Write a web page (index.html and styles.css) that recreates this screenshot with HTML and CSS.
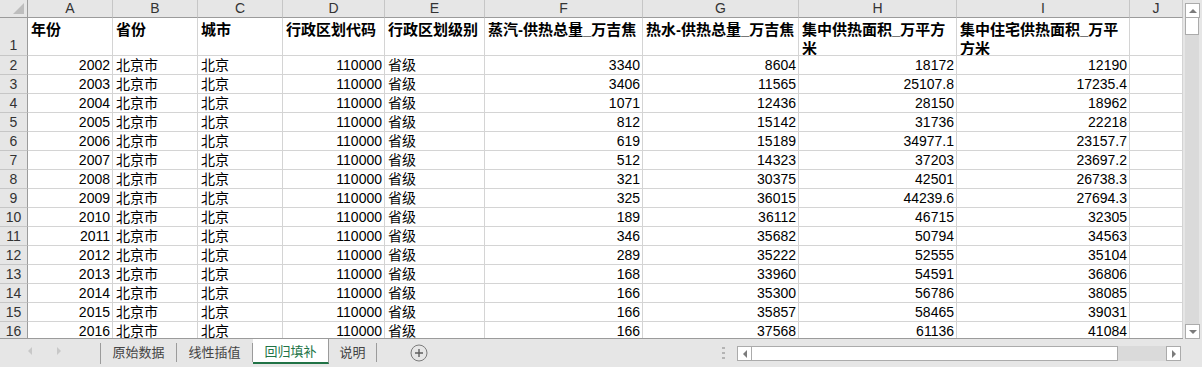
FILE: index.html
```html
<!doctype html>
<html lang="zh">
    <head>
        <meta charset="utf-8">
        <title>回归填补</title>
        <link rel="stylesheet" href="styles.css">
    </head>
    <body>
        <div class="book">

            <div class="main">
                <div class="sheet">

                    <div class="row row-cols">
                        <div class="corner"></div>
                        <div>A</div><div>B</div><div>C</div><div>D</div><div>E</div>
                        <div>F</div><div>G</div><div>H</div><div>I</div><div>J</div>
                    </div>

                    <div class="row row-head">
                        <div class="rh">1</div>
                        <div>年份</div>
                        <div>省份</div>
                        <div>城市</div>
                        <div>行政区划代码</div>
                        <div>行政区划级别</div>
                        <div>蒸汽-供热总量_万吉焦</div>
                        <div>热水-供热总量_万吉焦</div>
                        <div>集中供热面积_万平方<br>米</div>
                        <div>集中住宅供热面积_万平<br>方米</div>
                        <div></div>
                    </div>

                    <div class="row"><div class="rh">2</div><div class="n">2002</div><div>北京市</div><div>北京</div><div class="n">110000</div><div>省级</div><div class="n">3340</div><div class="n">8604</div><div class="n">18172</div><div class="n">12190</div><div></div></div>
                    <div class="row"><div class="rh">3</div><div class="n">2003</div><div>北京市</div><div>北京</div><div class="n">110000</div><div>省级</div><div class="n">3406</div><div class="n">11565</div><div class="n">25107.8</div><div class="n">17235.4</div><div></div></div>
                    <div class="row"><div class="rh">4</div><div class="n">2004</div><div>北京市</div><div>北京</div><div class="n">110000</div><div>省级</div><div class="n">1071</div><div class="n">12436</div><div class="n">28150</div><div class="n">18962</div><div></div></div>
                    <div class="row"><div class="rh">5</div><div class="n">2005</div><div>北京市</div><div>北京</div><div class="n">110000</div><div>省级</div><div class="n">812</div><div class="n">15142</div><div class="n">31736</div><div class="n">22218</div><div></div></div>
                    <div class="row"><div class="rh">6</div><div class="n">2006</div><div>北京市</div><div>北京</div><div class="n">110000</div><div>省级</div><div class="n">619</div><div class="n">15189</div><div class="n">34977.1</div><div class="n">23157.7</div><div></div></div>
                    <div class="row"><div class="rh">7</div><div class="n">2007</div><div>北京市</div><div>北京</div><div class="n">110000</div><div>省级</div><div class="n">512</div><div class="n">14323</div><div class="n">37203</div><div class="n">23697.2</div><div></div></div>
                    <div class="row"><div class="rh">8</div><div class="n">2008</div><div>北京市</div><div>北京</div><div class="n">110000</div><div>省级</div><div class="n">321</div><div class="n">30375</div><div class="n">42501</div><div class="n">26738.3</div><div></div></div>
                    <div class="row"><div class="rh">9</div><div class="n">2009</div><div>北京市</div><div>北京</div><div class="n">110000</div><div>省级</div><div class="n">325</div><div class="n">36015</div><div class="n">44239.6</div><div class="n">27694.3</div><div></div></div>
                    <div class="row"><div class="rh">10</div><div class="n">2010</div><div>北京市</div><div>北京</div><div class="n">110000</div><div>省级</div><div class="n">189</div><div class="n">36112</div><div class="n">46715</div><div class="n">32305</div><div></div></div>
                    <div class="row"><div class="rh">11</div><div class="n">2011</div><div>北京市</div><div>北京</div><div class="n">110000</div><div>省级</div><div class="n">346</div><div class="n">35682</div><div class="n">50794</div><div class="n">34563</div><div></div></div>
                    <div class="row"><div class="rh">12</div><div class="n">2012</div><div>北京市</div><div>北京</div><div class="n">110000</div><div>省级</div><div class="n">289</div><div class="n">35222</div><div class="n">52555</div><div class="n">35104</div><div></div></div>
                    <div class="row"><div class="rh">13</div><div class="n">2013</div><div>北京市</div><div>北京</div><div class="n">110000</div><div>省级</div><div class="n">168</div><div class="n">33960</div><div class="n">54591</div><div class="n">36806</div><div></div></div>
                    <div class="row"><div class="rh">14</div><div class="n">2014</div><div>北京市</div><div>北京</div><div class="n">110000</div><div>省级</div><div class="n">166</div><div class="n">35300</div><div class="n">56786</div><div class="n">38085</div><div></div></div>
                    <div class="row"><div class="rh">15</div><div class="n">2015</div><div>北京市</div><div>北京</div><div class="n">110000</div><div>省级</div><div class="n">166</div><div class="n">35857</div><div class="n">58465</div><div class="n">39031</div><div></div></div>
                    <div class="row"><div class="rh">16</div><div class="n">2016</div><div>北京市</div><div>北京</div><div class="n">110000</div><div>省级</div><div class="n">166</div><div class="n">37568</div><div class="n">61136</div><div class="n">41084</div><div></div></div>

                </div>

                <!-- vertical scrollbar -->
                <div class="vscroll">
                    <div class="sb-btn"><span class="tri tri-up"></span></div>
                    <div class="sb-thumb-v"></div>
                    <div class="sb-fill"></div>
                    <div class="sb-btn"><span class="tri tri-down"></span></div>
                </div>
            </div>

            <div class="tabbar">
                <div class="tab-nav">
                    <span class="tri tri-left"></span>
                    <span class="tri tri-right"></span>
                </div>
                <div class="tabs">
                    <div class="tab">原始数据</div>
                    <div class="tab">线性插值</div>
                    <div class="tab active">回归填补</div>
                    <div class="tab">说明</div>
                </div>
                <div class="add-sheet">
                    <svg width="18" height="18" viewBox="0 0 18 18">
                        <circle cx="9" cy="9" r="8" fill="none" stroke="#7b7b7b" stroke-width="1"/>
                        <path d="M9 5v8M5 9h8" stroke="#5f5f5f" stroke-width="1.4"/>
                    </svg>
                </div>
                <div class="splitter"><i></i><i></i><i></i></div>
                <div class="hscroll">
                    <div class="sb-btn"><span class="tri tri-left dark"></span></div>
                    <div class="sb-thumb-h"></div>
                    <div class="sb-fill"></div>
                    <div class="sb-btn"><span class="tri tri-right dark"></span></div>
                </div>
            </div>

        </div>
    </body>
</html>
```

FILE: styles.css
```css
html,
body {
    margin: 0;
    padding: 0;
}

body {
    font-family: "Liberation Sans", "Noto Sans CJK SC", sans-serif;
    font-size: 14px;
    color: #000;
    background: #e6e6e6;
}

.book {
    width: 1202px;
    height: 367px;
    display: flex;
    flex-direction: column;
    background: #e6e6e6;
    overflow: hidden;
}

.main {
    display: flex;
    height: 339px;
    flex: none;
}

/* grid */

.sheet {
    width: 1183px;
    height: 339px;
    overflow: hidden;
    background: #fff;
    border-bottom: 1px solid #9b9b9b;
    box-sizing: border-box;
}

.row {
    display: grid;
    grid-template-columns: 28px 85px 85px 85px 102px 100px 158px 156px 158px 173px 53px;
    height: 19px;
}

.row > div {
    box-sizing: border-box;
    border-right: 1px solid #d4d4d4;
    border-bottom: 1px solid #d4d4d4;
    padding: 0 3px;
    line-height: 18px;
    white-space: nowrap;
    overflow: hidden;
}

.row > .n {
    text-align: right;
    padding-right: 2px;
}

.row > .rh {
    background: #e6e6e6;
    color: #333;
    text-align: center;
    padding: 0;
    border-bottom-color: #c6c6c6;
    border-right-color: #9b9b9b;
}

.row-cols {
    height: 18px;
}

.row-cols > div {
    background: #e6e6e6;
    color: #333;
    text-align: center;
    line-height: 17px;
    border-right-color: #c6c6c6;
    border-bottom-color: #9b9b9b;
}

.row-cols > .corner {
    position: relative;
    border-right-color: #9b9b9b;
}

.corner::after {
    content: "";
    position: absolute;
    right: 3px;
    bottom: 3px;
    border-style: solid;
    border-width: 0 0 11px 11px;
    border-color: transparent transparent #bdbdbd transparent;
}

.row-head {
    height: 38px;
}

.row-head > div {
    font-size: 15px;
    font-weight: bold;
    line-height: 19px;
    padding-top: 2px;
}

.row-head > .rh {
    font-size: 14px;
    font-weight: normal;
    padding-top: 18px;
}

/* scrollbars */

.vscroll {
    width: 19px;
    display: flex;
    flex-direction: column;
    padding: 3px 3px 0 2px;
    box-sizing: border-box;
    background: #e6e6e6;
}

.vscroll .sb-fill {
    flex: 1;
    background: #dadada;
}

.sb-btn {
    width: 15px;
    height: 15px;
    box-sizing: border-box;
    border: 1px solid #ababab;
    background: #fff;
    display: flex;
    align-items: center;
    justify-content: center;
    flex: none;
}

.sb-thumb-v {
    height: 16px;
    background: #fff;
    border: 1px solid #ababab;
    border-top: none;
    flex: none;
}

.tri {
    display: block;
    width: 0;
    height: 0;
    border-style: solid;
}

.tri-up {
    border-width: 0 4px 4px 4px;
    border-color: transparent transparent #7b7b7b transparent;
}

.tri-down {
    border-width: 4px 4px 0 4px;
    border-color: #7b7b7b transparent transparent transparent;
}

.tri-left {
    border-width: 4px 4px 4px 0;
    border-color: transparent #c8c8c8 transparent transparent;
}

.tri-right {
    border-width: 4px 0 4px 4px;
    border-color: transparent transparent transparent #c8c8c8;
}

.tri-left.dark {
    border-right-color: #7b7b7b;
}

.tri-right.dark {
    border-left-color: #7b7b7b;
}

/* sheet tabs */

.tabbar {
    height: 28px;
    display: flex;
    align-items: flex-start;
}

.tab-nav {
    width: 100px;
    height: 24px;
    display: flex;
    align-items: center;
    gap: 25px;
    padding-left: 28px;
    box-sizing: border-box;
}

.tabs {
    display: flex;
    border-left: 1px solid #9b9b9b;
    margin-top: 4px;
}

.tab {
    width: 75px;
    height: 19px;
    line-height: 19px;
    font-size: 13px;
    color: #444;
    text-align: center;
    border-right: 1px solid #9b9b9b;
}

.tab:last-child {
    width: 47px;
}

.tab.active {
    margin-top: -4px;
    height: 23px;
    line-height: 25px;
    background: #fff;
    color: #217346;
    border-bottom: 2px solid #217346;
}

.add-sheet {
    margin: 5px 0 0 33px;
    height: 18px;
}

.splitter {
    margin: 8px 0 0 294px;
    width: 3px;
    display: flex;
    flex-direction: column;
    gap: 3px;
}

.splitter i {
    display: block;
    width: 3px;
    height: 2px;
    background: #b4b4b4;
}

.hscroll {
    margin: 7px 0 0 12px;
    width: 444px;
    height: 15px;
    display: flex;
    background: #dadada;
}

.hscroll .sb-fill {
    flex: 1;
}

.sb-thumb-h {
    width: 366px;
    height: 15px;
    box-sizing: border-box;
    background: #fff;
    border: 1px solid #ababab;
    border-left: none;
}
```
